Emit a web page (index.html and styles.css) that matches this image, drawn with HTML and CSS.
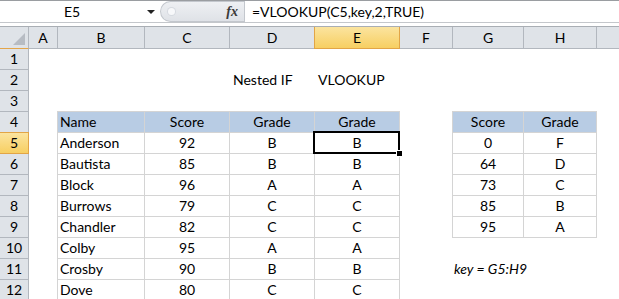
FILE: index.html
```html
<!DOCTYPE html>
<html>
<head>
<meta charset="utf-8">
<link rel="stylesheet" href="styles.css">
</head>
<body>
<div class="fbar">
  <div class="namebox"><span class="nb-text">E5</span><span class="nb-arrow"></span></div>
  <div class="pill"><span class="pill-dot"></span><span class="fx">fx</span></div>
  <div class="formula">=VLOOKUP(C5,key,2,TRUE)</div>
</div>
<div class="sep"></div>
<div class="colheads">
  <div class="ch corner"><svg width="12" height="12" viewBox="0 0 12 12"><polygon points="12,0 12,12 0,12" fill="#b7bcc3"/></svg></div>
  <div class="ch">A</div><div class="ch">B</div><div class="ch">C</div><div class="ch">D</div>
  <div class="ch hl">E</div><div class="ch">F</div><div class="ch">G</div><div class="ch">H</div><div class="ch last"></div>
</div>
<div class="sheet">
  <div class="rh">1</div><div></div><div></div><div></div><div></div><div></div><div></div><div></div><div></div><div></div>
  <div class="rh">2</div><div></div><div></div><div></div><div class="c title">Nested IF</div><div class="c title">VLOOKUP</div><div></div><div></div><div></div><div></div>
  <div class="rh">3</div><div></div><div></div><div></div><div></div><div></div><div></div><div></div><div></div><div></div>
  <div class="rh">4</div><div></div><div class="c t l th">Name</div><div class="c t th">Score</div><div class="c t th">Grade</div><div class="c t th">Grade</div><div></div><div class="c t lg th">Score</div><div class="c t th">Grade</div><div></div>
  <div class="rh hl">5</div><div></div><div class="c t l">Anderson</div><div class="c t">92</div><div class="c t">B</div><div class="c t sel">B</div><div></div><div class="c t lg">0</div><div class="c t">F</div><div></div>
  <div class="rh">6</div><div></div><div class="c t l">Bautista</div><div class="c t">85</div><div class="c t">B</div><div class="c t">B</div><div></div><div class="c t lg">64</div><div class="c t">D</div><div></div>
  <div class="rh">7</div><div></div><div class="c t l">Block</div><div class="c t">96</div><div class="c t">A</div><div class="c t">A</div><div></div><div class="c t lg">73</div><div class="c t">C</div><div></div>
  <div class="rh">8</div><div></div><div class="c t l">Burrows</div><div class="c t">79</div><div class="c t">C</div><div class="c t">C</div><div></div><div class="c t lg">85</div><div class="c t">B</div><div></div>
  <div class="rh">9</div><div></div><div class="c t l">Chandler</div><div class="c t">82</div><div class="c t">C</div><div class="c t">C</div><div></div><div class="c t lg">95</div><div class="c t">A</div><div></div>
  <div class="rh">10</div><div></div><div class="c t l">Colby</div><div class="c t">95</div><div class="c t">A</div><div class="c t">A</div><div></div><div></div><div></div><div></div>
  <div class="rh">11</div><div></div><div class="c t l">Crosby</div><div class="c t">90</div><div class="c t">B</div><div class="c t">B</div><div></div><div class="c key">key = G5:H9</div><div></div><div></div>
  <div class="rh">12</div><div></div><div class="c t l">Dove</div><div class="c t">80</div><div class="c t">C</div><div class="c t">C</div><div></div><div></div><div></div><div></div>
</div>
</body>
</html>
```
FILE: styles.css
```css
html, body {
  margin: 0;
  padding: 0;
}
body {
  width: 619px;
  height: 299px;
  overflow: hidden;
  background: #fff;
  font-family: Lato, "Open Sans", sans-serif;
  font-size: 14px;
  color: #000;
}
.fbar {
  display: flex;
  height: 21px;
  border-top: 1px solid #9a9da1;
  border-bottom: 1px solid #c4c7cb;
  background: #fff;
}
.namebox {
  width: 160px;
  display: flex;
  align-items: center;
}
.nb-text {
  width: 144px;
  text-align: center;
  line-height: 21px;
}
.nb-arrow {
  width: 0;
  height: 0;
  margin-left: 3px;
  border-left: 4px solid transparent;
  border-right: 4px solid transparent;
  border-top: 4px solid #222;
}
.pill {
  width: 84px;
  height: 21px;
  box-sizing: border-box;
  background: linear-gradient(#eef0f3, #dfe2e7);
  border: 1px solid #c3c7cd;
  border-right: none;
  border-radius: 11px 0 0 11px;
  display: flex;
  align-items: center;
  justify-content: space-between;
  padding: 0 6px 0 7px;
}
.pill-dot {
  width: 7px;
  height: 7px;
  border-radius: 50%;
  background: #f7f8fa;
  box-shadow: 0 0 0 1px #d6dae0;
}
.fx {
  font-family: "Liberation Serif", serif;
  font-style: italic;
  font-weight: bold;
  font-size: 14px;
  color: #3a3a3a;
}
.formula {
  flex: 1;
  border-left: 1px solid #c3c7cd;
  padding-left: 7px;
  line-height: 21px;
  white-space: nowrap;
}
.sep {
  height: 3px;
  background: #fff;
  border-bottom: 1px solid #a9aeb4;
}
.colheads {
  display: grid;
  grid-template-columns: 29px 29px 87px 85px 85px 85px 53px 71px 73px 1fr;
  height: 22px;
}
.ch {
  background: #dfe3e8;
  border-right: 1px solid #b2b7be;
  border-bottom: 1px solid #b2b7be;
  text-align: center;
  line-height: 21px;
}
.ch.last {
  border-right: none;
}
.corner {
  border-bottom-color: #e3a54a;
  display: flex;
  align-items: flex-end;
  justify-content: flex-end;
  padding: 0 3px 3px 0;
  box-sizing: border-box;
}
.ch.hl {
  background: linear-gradient(#fbe49f, #f7cf62);
  border-right-color: #e2a546;
  border-bottom-color: #e2a546;
  box-shadow: -1px 0 0 #e2a546;
}
.sheet {
  display: grid;
  grid-template-columns: 29px 28px 88px 85px 85px 85px 52px 72px 73px 1fr;
  grid-auto-rows: 21px;
}
.rh {
  background: #dfe3e8;
  border-right: 1px solid #b2b7be;
  border-bottom: 1px solid #b2b7be;
  text-align: center;
  line-height: 20px;
}
.rh.hl {
  background: linear-gradient(#fbe49f, #f7cf62);
  border-right-color: #e2a546;
  border-bottom-color: #e2a546;
  box-shadow: 0 -1px 0 #e2a546;
}
.c {
  line-height: 20px;
  white-space: nowrap;
}
.title {
  padding-left: 3px;
}
.t {
  border-right: 1px solid #d4d4d4;
  border-bottom: 1px solid #d4d4d4;
  text-align: center;
}
.t.l {
  border-left: 1px solid #d4d4d4;
  text-align: left;
  padding-left: 2px;
}
.t.lg {
  border-left: 1px solid #d4d4d4;
}
.th {
  background: #b8cce4;
  box-shadow: 0 -1px 0 #d4d4d4;
}
.sel {
  position: relative;
}
.sel::after {
  content: "";
  position: absolute;
  left: -2px;
  top: -2px;
  right: -1px;
  bottom: -1px;
  border: 2px solid #000;
}
.sel::before {
  content: "";
  position: absolute;
  left: 81px;
  top: 17px;
  width: 5px;
  height: 5px;
  background: #000;
  border: 1px solid #fff;
  z-index: 2;
}
.key {
  font-style: italic;
  padding-left: 2px;
}
```
